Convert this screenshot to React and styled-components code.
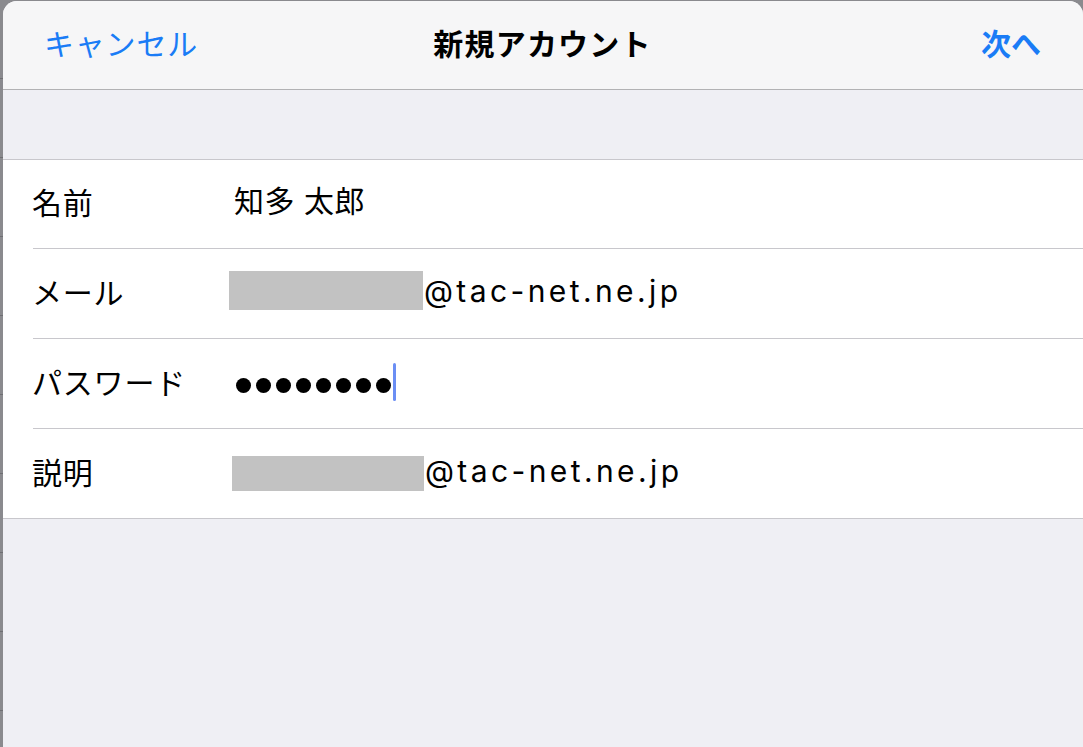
import React from "react";
import styled, { createGlobalStyle } from "styled-components";

const GlobalStyle = createGlobalStyle`
  html, body { margin: 0; padding: 0; }
  body {
    background: #8a8a8e;
    font-family: "Inter", "Noto Sans CJK JP", sans-serif;
    -webkit-font-smoothing: antialiased;
  }
`;

const Page = styled.div`
  display: flex;
  width: 1083px;
  height: 747px;
  overflow: hidden;
  background: #8a8a8e;
`;

const Backdrop = styled.div`
  width: 3px;
  flex: none;
  background:
    repeating-linear-gradient(
      to bottom,
      transparent 0px,
      transparent 78px,
      #6f6f73 78px,
      #6f6f73 79px
    ),
    #8a8a8e;
`;

const Sheet = styled.div`
  flex: 1;
  margin-top: 1px;
  display: flex;
  flex-direction: column;
  background: #efeff4;
  border-radius: 14px 14px 0 0;
  overflow: hidden;
`;

const NavBar = styled.header`
  height: 88px;
  flex: none;
  display: grid;
  grid-template-columns: 1fr auto 1fr;
  align-items: center;
  padding: 0 42px 0 41px;
  background: #f6f6f7;
  border-bottom: 1px solid #b2b2b4;
`;

const NavButton = styled.button`
  border: 0;
  background: none;
  padding: 0 0 6px;
  color: #1a7cf6;
  font-family: "Noto Sans CJK JP", sans-serif;
  font-size: 30px;
  line-height: 44px;
  font-weight: ${(p) => (p.$bold ? 700 : 400)};
  justify-self: ${(p) => (p.$end ? "end" : "start")};
  letter-spacing: ${(p) => (p.$bold ? "0px" : "0.8px")};
  cursor: pointer;
`;

const Title = styled.h1`
  margin: 0;
  padding-bottom: 6px;
  font-family: "Noto Sans CJK JP", sans-serif;
  font-size: 30px;
  line-height: 44px;
  font-weight: 700;
  color: #000;
  letter-spacing: 1.2px;
`;

const Gap = styled.div`
  height: 69px;
  flex: none;
`;

const Group = styled.section`
  background: #fff;
  border-top: 1px solid #c8c7cc;
  border-bottom: 1px solid #c8c7cc;
  padding-left: 30px;
`;

const Row = styled.div`
  display: flex;
  align-items: center;
  box-sizing: border-box;
  height: 90px;
  border-bottom: 1px solid #c8c7cc;

  &:first-child {
    height: 89px;
  }
  &:last-child {
    height: 89px;
    border-bottom: 0;
  }
`;

const Label = styled.div`
  width: 202px;
  flex: none;
  margin-left: -1px;
  padding-bottom: 6px;
  font-family: "Noto Sans CJK JP", sans-serif;
  font-size: 30px;
  line-height: 44px;
  color: #000;
  letter-spacing: 0.8px;
`;

const Value = styled.div`
  display: flex;
  align-items: center;
  padding-bottom: ${(p) => (p.$raw ? 0 : 6)}px;
  font-family: "Inter", "Noto Sans CJK JP", sans-serif;
  font-size: 30px;
  line-height: 44px;
  color: #000;
  letter-spacing: 0.5px;
`;

const Redacted = styled.span`
  display: inline-block;
  flex: none;
  width: ${(p) => p.$w}px;
  height: ${(p) => p.$h}px;
  margin-left: ${(p) => p.$shift}px;
  margin-top: ${(p) => p.$top || 0}px;
  background: #c2c2c2;
`;

const Domain = styled.span`
  letter-spacing: 3.4px;
  margin-left: 1px;
`;

const Dots = styled.span`
  display: flex;
  gap: 5px;
  margin-left: 2px;
  margin-top: 4px;
`;

const Dot = styled.span`
  width: 15px;
  height: 15px;
  border-radius: 50%;
  background: #000;
`;

const Caret = styled.span`
  width: 3px;
  height: 38px;
  margin-left: 2px;
  margin-top: -4px;
  border-radius: 1.5px;
  background: #6b8ef4;
`;

export default function App() {
  return (
    <>
      <GlobalStyle />
      <Page>
        <Backdrop />
        <Sheet>
          <NavBar>
            <NavButton>キャンセル</NavButton>
            <Title>新規アカウント</Title>
            <NavButton $bold $end>次へ</NavButton>
          </NavBar>
          <Gap />
          <Group>
            <Row>
              <Label>名前</Label>
              <Value>知多 太郎</Value>
            </Row>
            <Row>
              <Label>メール</Label>
              <Value>
                <Redacted $w={194} $h={39} $shift={-5} />
                <Domain>@tac-net.ne.jp</Domain>
              </Value>
            </Row>
            <Row>
              <Label>パスワード</Label>
              <Value $raw aria-label="パスワード ●●●●●●●●">
                <Dots>
                  {Array.from({ length: 8 }).map((_, i) => (
                    <Dot key={i} />
                  ))}
                </Dots>
                <Caret />
              </Value>
            </Row>
            <Row>
              <Label>説明</Label>
              <Value>
                <Redacted $w={192} $h={35} $shift={-2} $top={6} />
                <Domain>@tac-net.ne.jp</Domain>
              </Value>
            </Row>
          </Group>
        </Sheet>
      </Page>
    </>
  );
}
